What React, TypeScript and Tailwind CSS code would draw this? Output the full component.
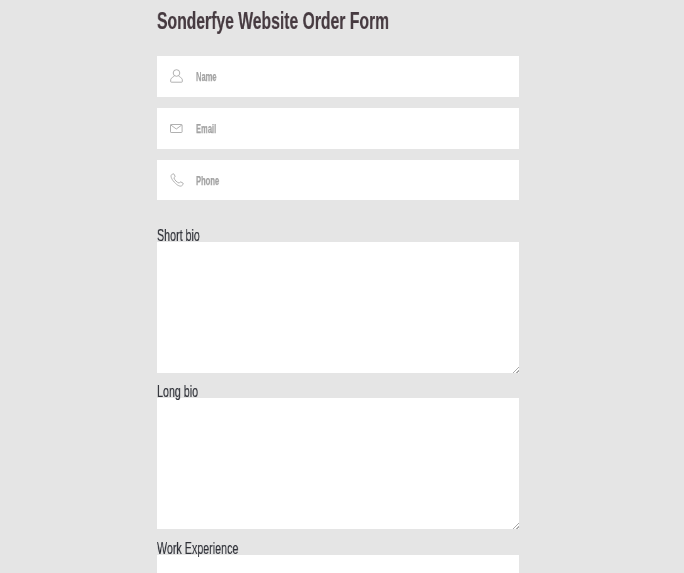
const font = "[font-family:'Liberation_Sans',sans-serif]";

function UserIcon() {
  return (
    <svg width="13" height="14" viewBox="0 0 13 14" fill="none" stroke="currentColor" strokeWidth="0.9">
      <circle cx="6.5" cy="4" r="3.3" />
      <path d="M4.4 6.8 C3.6 8.2 1 8.6 .7 10.6 V12.6 C.7 13 .9 13.2 1.3 13.2 H11.7 C12.1 13.2 12.3 13 12.3 12.6 V10.6 C12 8.6 9.4 8.2 8.6 6.8" />
    </svg>
  );
}

function MailIcon() {
  return (
    <svg width="13" height="9" viewBox="0 0 13 9" fill="none" stroke="currentColor" strokeWidth="0.9">
      <rect x=".5" y=".5" width="11.6" height="8" rx=".6" />
      <path d="M.8 1 L6.3 5 L11.8 1" />
    </svg>
  );
}

function PhoneIcon() {
  return (
    <svg width="14" height="14" viewBox="0 0 14 14" fill="none" stroke="currentColor" strokeWidth="0.9">
      <path d="M1.2 2.4 L2.6 .9 C3 .5 3.5 .6 3.8 1 L5 3 C5.2 3.4 5.1 3.8 4.8 4 L3.9 4.8 C4.4 6.9 7 9.5 9.2 10.1 L10 9.2 C10.3 8.9 10.7 8.8 11 9 L13 10.2 C13.4 10.5 13.5 11 13.1 11.4 L11.6 12.8 C10.8 13.4 8.6 13.4 5.6 10.4 C1.6 6.8 .6 3.4 1.2 2.4 Z" />
    </svg>
  );
}

function Field({ icon, label }: { icon: React.ReactNode; label: string }) {
  return (
    <div className="flex h-[40.65px] items-center bg-white pl-[13px]">
      <span className="flex w-[26px] text-[#a8a8a8]">{icon}</span>
      <span className="origin-left translate-y-px scale-x-[.63] text-[12px] font-bold whitespace-nowrap text-[#a3a3a3] will-change-transform [-webkit-text-stroke:0.25px]">
        {label}
      </span>
    </div>
  );
}

function Area({ label }: { label: string }) {
  return (
    <div className="flex flex-col">
      <label className="h-[17px] origin-left scale-x-[.63] text-[17px] leading-[21px] whitespace-nowrap text-[#2f3138] will-change-transform [-webkit-text-stroke:0.15px]">
        {label}
      </label>
      <textarea className="block h-[131px] w-full bg-white outline-none [&::-webkit-resizer]:bg-[linear-gradient(135deg,transparent_78%,#aaa_78%,#aaa_83%,transparent_83%,transparent_90%,#aaa_90%,#aaa_95%,transparent_95%)]" />
    </div>
  );
}

export default function App() {
  return (
    <div className={`h-screen overflow-hidden bg-[#e5e5e5] ${font}`}>
      <div className="ml-[157px] w-[362px]">
        <h1 className="origin-left scale-x-[.655] pt-[7px] text-[24px] leading-[28px] font-bold whitespace-nowrap text-[#463a40] will-change-transform [-webkit-text-stroke:0.2px]">
          Sonderfye Website Order Form
        </h1>
        <div className="mt-[21px] flex flex-col gap-[11.25px]">
          <Field icon={<UserIcon />} label="Name" />
          <Field icon={<MailIcon />} label="Email" />
          <Field icon={<PhoneIcon />} label="Phone" />
        </div>
        <div className="mt-[24.5px] flex flex-col gap-[8.5px]">
          <Area label="Short bio" />
          <Area label="Long bio" />
          <Area label="Work Experience" />
        </div>
      </div>
    </div>
  );
}
